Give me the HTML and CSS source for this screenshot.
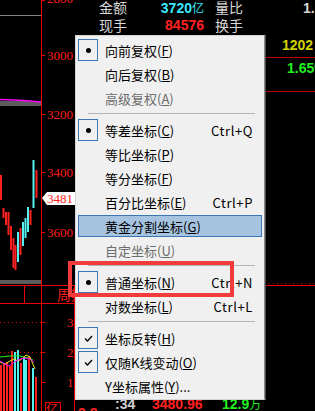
FILE: index.html
```html
<html>

<head>
    <meta name="viewport" content="width=device-width, initial-scale=1">
    <link rel="stylesheet" href="styles.css">
</head>

<body>
    <div class="screen">
        <svg class="chart" width="315" height="411" viewBox="0 0 315 411">
            <!-- quote header -->
            <g class="cjk">
                <text x="99" y="13" fill="#d8d8d8">金额</text>
                <text x="99" y="31" fill="#d8d8d8">现手</text>
                <text x="215" y="13" fill="#d8d8d8">量比</text>
                <text x="215" y="31" fill="#d8d8d8">换手</text>
            </g>
            <g class="num">
                <text x="204" y="13" text-anchor="end" fill="#38e8ff">3720<tspan class="cjk-small">亿</tspan></text>
                <text x="204" y="30" text-anchor="end" fill="#ff2020">84576</text>
                <text x="303" y="13" fill="#d8d8d8">1.</text>
                <text x="282" y="50" fill="#d2d200">1202</text>
                <text x="287" y="73" fill="#20f020">1.65%</text>
                <text x="115" y="409" fill="#d0d0d0">:34</text>
                <text x="152" y="409" fill="#ff2020">3480.96</text>
                <text x="222" y="409" fill="#20f020">12.9<tspan class="cjk-small">万</tspan></text>
                <text x="78" y="418" fill="#ff2020">3.8</text>
            </g>
            <line x1="265" y1="57.5" x2="315" y2="57.5" stroke="#c00000" />
            <line x1="265" y1="91.5" x2="315" y2="91.5" stroke="#c00000" />
            <line x1="265" y1="283.5" x2="315" y2="283.5" stroke="#e00000" stroke-dasharray="1 3" />

            <!-- price panel -->
            <line x1="0" y1="15.5" x2="41" y2="15.5" stroke="#808080" />
            <rect x="0" y="101" width="41" height="5" fill="#5c5c5c" />
            <polyline points="0,99.5 15,100 30,101 41,102" fill="none" stroke="#ff00ff" stroke-width="1.5" />
            <line x1="41.5" y1="0" x2="41.5" y2="411" stroke="#f00000" />
            <g stroke="#f00000">
                <line x1="41" y1="0.5" x2="45" y2="0.5" />
                <line x1="41" y1="55.5" x2="45" y2="55.5" />
                <line x1="41" y1="114.5" x2="45" y2="114.5" />
                <line x1="41" y1="172.5" x2="45" y2="172.5" />
                <line x1="41" y1="232.5" x2="45" y2="232.5" />
            </g>
            <g class="axis" fill="#ff1a1a">
                <text x="47" y="3">2800</text>
                <text x="47" y="60">3000</text>
                <text x="47" y="119">3200</text>
                <text x="47" y="177">3400</text>
                <text x="47" y="237">3600</text>
            </g>
            <polygon points="42,198 47,192 76,192 76,205 47,205" fill="#ffffff" />
            <text class="axis" x="47" y="203" fill="#ff1a1a">3481</text>

            <g stroke-width="2">
                <line x1="1" y1="175" x2="1" y2="200" stroke="#ff2020" />
                <line x1="3.5" y1="208" x2="3.5" y2="218" stroke="#ff2020" />
                <line x1="6" y1="212" x2="6" y2="225" stroke="#ff2020" />
                <line x1="8.5" y1="212" x2="8.5" y2="235" stroke="#ff2020" />
                <line x1="11" y1="226" x2="11" y2="250" stroke="#ff2020" />
                <line x1="13.5" y1="238" x2="13.5" y2="268" stroke="#ff2020" />
                <line x1="15.5" y1="245" x2="15.5" y2="270" stroke="#ff2020" />
                <line x1="18" y1="232" x2="18" y2="262" stroke="#55f0f0" />
                <line x1="20.5" y1="228" x2="20.5" y2="255" stroke="#ff2020" />
                <line x1="23" y1="222" x2="23" y2="246" stroke="#55f0f0" />
                <line x1="25.5" y1="218" x2="25.5" y2="238" stroke="#55f0f0" />
                <line x1="28" y1="207" x2="28" y2="232" stroke="#55f0f0" />
                <line x1="30.5" y1="210" x2="30.5" y2="225" stroke="#ff2020" />
                <line x1="33.5" y1="160" x2="33.5" y2="208" stroke="#55f0f0" />
                <line x1="36.5" y1="170" x2="36.5" y2="198" stroke="#ff2020" />
            </g>
            <rect x="0" y="280" width="41" height="4" fill="#5c5c5c" />

            <!-- volume panel -->
            <g stroke="#f00000">
                <line x1="0" y1="285.5" x2="315" y2="285.5" />
                <line x1="0" y1="303.5" x2="75" y2="303.5" />
                <line x1="24.5" y1="285" x2="24.5" y2="303" />
                <line x1="74.5" y1="285" x2="74.5" y2="411" />
                <line x1="41" y1="322.5" x2="45" y2="322.5" />
                <line x1="41" y1="352.5" x2="45" y2="352.5" />
                <line x1="41" y1="382.5" x2="45" y2="382.5" />
            </g>
            <g stroke="#e00000" stroke-dasharray="1 3">
                <line x1="0" y1="322.5" x2="41" y2="322.5" />
                <line x1="0" y1="352.5" x2="41" y2="352.5" />
            </g>
            <text class="cjk" x="57" y="300" fill="#ff1a1a">周期</text>
            <g class="axis" fill="#ff1a1a">
                <text x="67" y="327">3</text>
                <text x="67" y="357">2</text>
                <text x="67" y="387">1</text>
            </g>
            <g>
                <rect x="0" y="365" width="2" height="46" fill="#ff2020" />
                <rect x="3" y="364" width="2" height="47" fill="#ff2020" />
                <rect x="6" y="362" width="2" height="49" fill="#ff2020" />
                <rect x="9" y="366" width="2" height="45" fill="#ff2020" />
                <rect x="11" y="351" width="2" height="60" fill="#ff2020" />
                <rect x="14" y="352" width="2" height="59" fill="#55f0f0" />
                <rect x="17" y="350" width="2" height="61" fill="#55f0f0" />
                <rect x="20" y="363" width="2" height="48" fill="#ff2020" />
                <rect x="23" y="357" width="2" height="54" fill="#55f0f0" />
                <rect x="25" y="360" width="2" height="51" fill="#55f0f0" />
                <rect x="28" y="357" width="2" height="54" fill="#ff2020" />
                <rect x="32" y="368" width="2" height="43" fill="#55f0f0" />
                <rect x="35" y="377" width="2" height="34" fill="#ff2020" />
            </g>
            <polyline points="0,357 10,356 20,356 28,358 33,360" fill="none" stroke="#20f020" />
            <polyline points="0,362 5,364 10,361 14,359 18,361 22,359 26,355 30,357 35,369" fill="none" stroke="#f0f020" />
            <polyline points="0,361 5,364 9,366 13,363 18,360 24,358 30,359 34,362" fill="none" stroke="#ff00ff" />
            <rect x="45.5" y="402.5" width="15" height="12" fill="none" stroke="#f00000" />
            <text class="cjk-small" x="46" y="414" fill="#ff1a1a">亿</text>
        </svg>

        <div class="menu">
            <div class="item"><span class="mark on"><span class="dot"></span></span><span class="label">向前复权(<u>F</u>)</span></div>
            <div class="item"><span class="mark"></span><span class="label">向后复权(<u>B</u>)</span></div>
            <div class="item disabled"><span class="mark"></span><span class="label">高级复权(<u>A</u>)</span></div>
            <div class="sep"></div>
            <div class="item"><span class="mark on"><span class="dot"></span></span><span class="label">等差坐标(<u>C</u>)</span><span class="key">Ctrl+Q</span></div>
            <div class="item"><span class="mark"></span><span class="label">等比坐标(<u>P</u>)</span></div>
            <div class="item"><span class="mark"></span><span class="label">等分坐标(<u>F</u>)</span></div>
            <div class="item"><span class="mark"></span><span class="label">百分比坐标(<u>E</u>)</span><span class="key">Ctrl+P</span></div>
            <div class="item hover"><span class="mark"></span><span class="label">黄金分割坐标(<u>G</u>)</span></div>
            <div class="item disabled"><span class="mark"></span><span class="label">自定坐标(<u>U</u>)</span></div>
            <div class="sep"></div>
            <div class="item"><span class="mark on"><span class="dot"></span></span><span class="label">普通坐标(<u>N</u>)</span><span class="key">Ctrl+N</span></div>
            <div class="item"><span class="mark"></span><span class="label">对数坐标(<u>L</u>)</span><span class="key">Ctrl+L</span></div>
            <div class="sep"></div>
            <div class="item"><span class="mark on"><svg width="9" height="7" viewBox="0 0 9 7"><path d="M1 3.5 L3.5 6 L8 1" fill="none" stroke="#000" stroke-width="1.3" /></svg></span><span class="label">坐标反转(<u>H</u>)</span></div>
            <div class="item"><span class="mark on"><svg width="9" height="7" viewBox="0 0 9 7"><path d="M1 3.5 L3.5 6 L8 1" fill="none" stroke="#000" stroke-width="1.3" /></svg></span><span class="label">仅随K线变动(<u>O</u>)</span></div>
            <div class="item"><span class="mark"></span><span class="label">Y坐标属性(<u>Y</u>)...</span></div>
        </div>

        <div class="focus-box"></div>
    </div>
</body>

</html>
```

FILE: styles.css
```css
body {
    margin: 0;
    background-color: #000;
}

.screen {
    position: relative;
    width: 315px;
    height: 411px;
    overflow: hidden;
    background-color: #000;
}

.chart {
    display: block;
}

.cjk {
    font-family: "Noto Sans CJK SC", sans-serif;
    font-size: 14px;
}

.cjk-small {
    font-family: "Noto Sans CJK SC", sans-serif;
    font-size: 12px;
    font-weight: normal;
}

.num {
    font-family: "Liberation Sans", "Noto Sans CJK SC", sans-serif;
    font-size: 14px;
    font-weight: bold;
}

.axis {
    font-family: "Liberation Serif", serif;
    font-size: 13px;
}

/* popup menu */
.menu {
    position: absolute;
    left: 75px;
    top: 35px;
    width: 188px;
    display: flex;
    flex-direction: column;
    padding: 2px 0 1px;
    background-color: #f0f0f0;
    border: 1px solid #d6d6d6;
    border-right-color: #8a8a8a;
    box-shadow: 1px 0 0 #4a4a4a;
    font-family: "Noto Sans CJK SC", sans-serif;
    font-size: 13px;
    color: #000;
}

.item {
    display: flex;
    align-items: center;
    height: 22px;
    margin: 1px 2px;
    box-sizing: border-box;
}

.item.hover {
    background-color: #a6c4e0;
    border: 1px solid #3a76b4;
}

.item.hover .mark {
    margin-left: -1px;
}

.item.disabled {
    color: #6d6d6d;
}

.mark {
    display: flex;
    align-items: center;
    justify-content: center;
    width: 20px;
    height: 22px;
    box-sizing: border-box;
    flex-shrink: 0;
}

.mark.on {
    border: 1px solid #3a76b4;
}

.dot {
    width: 5px;
    height: 5px;
    border-radius: 50%;
    background-color: #000;
}

.label {
    margin-left: 7px;
    white-space: nowrap;
}

.key {
    margin-left: auto;
    padding-right: 9px;
    letter-spacing: 0.6px;
}

.sep {
    height: 0;
    margin: 3px 9px 4px 12px;
    border-top: 1px solid #b4b4b4;
}

.focus-box {
    position: absolute;
    left: 68px;
    top: 261px;
    width: 158px;
    height: 28px;
    border: 4px solid #f23c3c;
}
```
